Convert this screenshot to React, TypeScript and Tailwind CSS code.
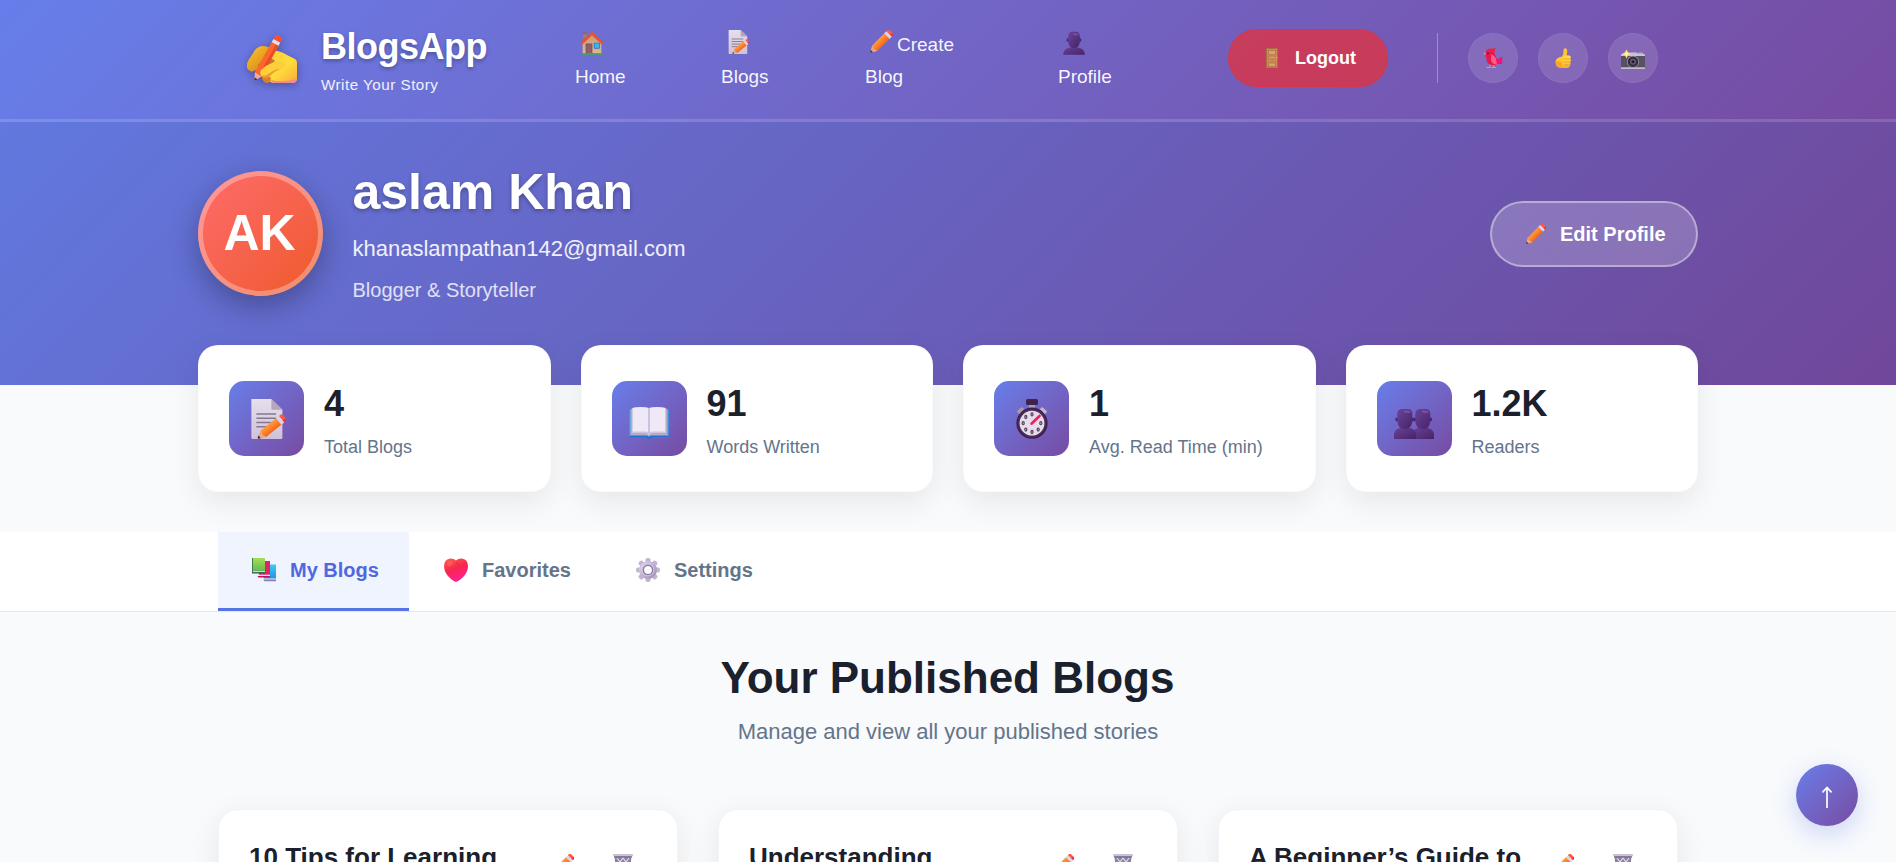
import React from "react";

type IconProps = { className?: string };

function Defs() {
  return (
    <svg className="absolute h-0 w-0" aria-hidden="true">
      <defs>
        <linearGradient id="gOrange" x1="0" x2="1" y1="0" y2="0">
          <stop offset="0" stopColor="#ff9a3c" />
          <stop offset="0.5" stopColor="#ff8228" />
          <stop offset="1" stopColor="#f0641e" />
        </linearGradient>
        <linearGradient id="gHand" x1="0" x2="1" y1="0" y2="1">
          <stop offset="0" stopColor="#ffc83d" />
          <stop offset="0.6" stopColor="#ffdc3c" />
          <stop offset="1" stopColor="#f9a63a" />
        </linearGradient>
        <linearGradient id="gHandBack" x1="0" x2="1" y1="0" y2="1">
          <stop offset="0" stopColor="#ffc928" />
          <stop offset="1" stopColor="#c97318" />
        </linearGradient>
        <linearGradient id="gPaper" x1="0" x2="0" y1="0" y2="1">
          <stop offset="0" stopColor="#e6dfec" />
          <stop offset="1" stopColor="#cfc2d8" />
        </linearGradient>
        <linearGradient id="gBust" x1="0" x2="1" y1="0" y2="1">
          <stop offset="0" stopColor="#6a4399" />
          <stop offset="1" stopColor="#462368" />
        </linearGradient>
        <linearGradient id="gHeart" x1="0.2" x2="0.6" y1="0" y2="1">
          <stop offset="0" stopColor="#ff5a4a" />
          <stop offset="0.45" stopColor="#f8264f" />
          <stop offset="1" stopColor="#ff1f96" />
        </linearGradient>
        <linearGradient id="gGear" x1="0" x2="1" y1="0" y2="1">
          <stop offset="0" stopColor="#d9cde6" />
          <stop offset="1" stopColor="#a794bd" />
        </linearGradient>
        <linearGradient id="gGreen" x1="0" x2="0" y1="0" y2="1">
          <stop offset="0" stopColor="#a6de52" />
          <stop offset="1" stopColor="#5cb557" />
        </linearGradient>
        <linearGradient id="gBlue" x1="0" x2="0" y1="0" y2="1">
          <stop offset="0" stopColor="#3ccbfa" />
          <stop offset="1" stopColor="#2590e6" />
        </linearGradient>
        <linearGradient id="gWood" x1="0" x2="0" y1="0" y2="1">
          <stop offset="0" stopColor="#c59a78" />
          <stop offset="1" stopColor="#dfb88c" />
        </linearGradient>
      </defs>
    </svg>
  );
}

function PencilBody() {
  return (
    <>
      <path d="M11.6 0.5V-1.500Q11.600-4 14-4h4q2.400 0 2.400 2.500v2z" fill="#ff5a3c" />
      <path d="M18 -4q2.400 0 2.400 2.500v2h-2.800z" fill="#e8323a" />
      <rect x="11.600" y="0.300" width="8.800" height="4.400" fill="#dcd3ea" />
      <path d="M11.600 4.600h8.800V27.500L16 29.500l-4.400-2z" fill="url(#gOrange)" />
      <path d="M11.600 27l4.400 1.500 4.400-1.500L16.900 34.600q-.9 1.400-1.800 0z" fill="#e0a98c" />
      <path d="M14.200 32.600h3.600l-.9 2q-.9 1.400-1.800 0z" fill="#4b2348" />
    </>
  );
}

function Pencil({ className }: IconProps) {
  return (
    <svg viewBox="0 0 32 32" className={className}>
      <g transform="rotate(45 16 16) translate(16 0) scale(1.160 1) translate(-16 .5)">
        <PencilBody />
      </g>
    </svg>
  );
}

function Memo({ className }: IconProps) {
  return (
    <svg viewBox="0 0 32 32" className={className}>
      <path d="M3.500 0h16l8.800 8.500V31q0 1-1 1H4.300q-.8 0-.8-1z" fill="url(#gPaper)" />
      <path d="M19.500 0l8.800 8.500h-7.800q-1 0-1-1z" fill="#b3a6bd" />
      <g stroke="#85788f" strokeWidth="1.200">
        <path d="M7.500 12h15.700M7.500 15.400h15.700M7.500 18.800h12M7.500 22.200h8.500" />
      </g>
      <g transform="translate(8.800 31.400) rotate(51) scale(.76 .7) translate(-16 -35)">
        <PencilBody />
      </g>
    </svg>
  );
}

function WritingHand({ className }: IconProps) {
  return (
    <svg viewBox="0 0 50 50" className={className}>
      <path d="M2 37Q-2 35 1 28L8 17Q13 11 21 14L29 18 15 38Q10 41 8 37Q5 40 2 37z" fill="url(#gHandBack)" />
      <path d="M12 32L22 17Q32 17 40 22L48 26Q50 27 50 30V45Q50 50 45 50H28Q22 50 21 45L12 38z" fill="url(#gHand)" />
      <path d="M11 32l9-10 8 6-14 12z" fill="#b05a23" opacity=".75" />
      <path d="M24 47q10 3 26-1 0 4-5 4H28q-3 0-4-3z" fill="#f28a8f" />
      <path d="M15 45q5-5 9 0 0 4-3 5-5 0-6-5z" fill="#e07f26" />
      <g transform="translate(20.300 25) rotate(29) scale(.93)">
        <path d="M-4-21v-3q0-3 3-3h2q3 0 3 3v3z" fill="#ff4f31" />
        <rect x="-4.200" y="-21" width="8.400" height="4" fill="#e6dcf0" />
        <path d="M-4.200-17h8.400v37h-8.400z" fill="#fb672a" />
        <path d="M1-17h3.200v37H1z" fill="#e84d22" />
        <path d="M-4.200 20h8.400L.8 27q-.8 1-1.600 0z" fill="#edaa9b" />
        <path d="M-1.800 25h3.600l-1 2q-.8 1-1.600 0z" fill="#471f45" />
      </g>
      <path d="M14 37q5-5 11-7 8-4 13 0 2 5-5 7-5 1-8 4-5 5-10 3-3-3-1-7z" fill="#ffcf3a" />
      <path d="M14 42q4 2 9-2 5-4 10-4-5 2-9 6-5 5-9 2z" fill="#f09a35" />
    </svg>
  );
}

function House({ className }: IconProps) {
  return (
    <svg viewBox="0 0 32 32" className={className}>
      <rect x="4" y="2.500" width="5" height="9" fill="#a87a66" />
      <rect x="3.600" y="2" width="5.800" height="1.800" fill="#8e6357" />
      <path d="M3.500 14L16 3l12.500 11v16h-25z" fill="url(#gWood)" />
      <path d="M16 .8L31.300 14.600l-1 2.900h-1.800L16 5.500 3.500 17.500H1.700l-1-2.900z" fill="#e2533b" />
      <rect x="7.500" y="16.500" width="9" height="13.500" rx=".6" fill="#7c5260" />
      <rect x="8.800" y="18" width="6.400" height="12" fill="#8f6067" />
      <rect x="18.500" y="15.500" width="8" height="8" rx=".8" fill="#2677c7" />
      <rect x="19.600" y="16.500" width="5.800" height="6" fill="#35b6f5" />
      <rect x="1" y="29.500" width="30" height="2" rx="1" fill="#3fa55c" />
    </svg>
  );
}

function Bust({ className }: IconProps) {
  return (
    <svg viewBox="0 0 32 32" className={className}>
      <path d="M1.500 31.500Q2 23.500 10 22.200l6-1.700 6 1.700q8 1.300 8.500 9.300z" fill="url(#gBust)" />
      <ellipse cx="7.700" cy="12" rx="1.700" ry="2.400" fill="#4a2871" />
      <ellipse cx="24.300" cy="12" rx="1.700" ry="2.400" fill="#4a2871" />
      <path d="M8.300 7Q8.300 1 14 1h4q5.700 0 5.700 6v7q0 8.500-7.700 8.500T8.300 14z" fill="url(#gBust)" />
      <path d="M15 3q6-1 7.500 2-3 2-7.500 0z" fill="#7c55a6" opacity=".8" />
    </svg>
  );
}

function BustWide() {
  return (
    <>
      <path d="M0 40v-4.500Q.3 29.500 7 29l4-1 4 1q6.500.5 7 6.500V40z" fill="url(#gBust)" />
      <ellipse cx="2.800" cy="20.500" rx="1.400" ry="2" fill="#4a2871" />
      <ellipse cx="18.800" cy="20.500" rx="1.400" ry="2" fill="#4a2871" />
      <path d="M3.300 15Q3.300 10 8.500 10h5q4.800 0 4.800 5v6q0 9-7.500 9t-7.500-9z" fill="url(#gBust)" />
      <path d="M10 11.500q6-.8 7 2-3.500 1.400-7 0z" fill="#7c55a6" opacity=".8" />
    </>
  );
}

function Busts({ className }: IconProps) {
  return (
    <svg viewBox="0 0 40 40" className={className}>
      <g transform="translate(18 0)">
        <BustWide />
      </g>
      <BustWide />
    </svg>
  );
}

function Door({ className }: IconProps) {
  return (
    <svg viewBox="0 0 12 20" className={className}>
      <rect width="12" height="20" rx=".6" fill="#a9713f" />
      <rect x="1" y="1" width="10" height="18.500" fill="#c98a58" />
      <path d="M2.500 2.500h7v4.200h-7zM2.500 8.200h7v2.500h-7zM2.500 15h7v3.500h-7z" fill="#dda06e" stroke="#a66b42" strokeWidth=".6" />
      <path d="M1 13.800h10" stroke="#e8734a" strokeWidth=".9" />
      <circle cx="10.500" cy="9.500" r="1" fill="#ff9f1c" />
    </svg>
  );
}

function Bird({ className }: IconProps) {
  return (
    <svg viewBox="0 0 20 20" className={className}>
      <path d="M.4 5.300L3 4.200v2.900z" fill="#ffb02e" />
      <path d="M7 16v3.300M10.600 16v3.300M3.200 19.500h4.300M8.600 19.500h4.300" stroke="#f0a020" strokeWidth="1" fill="none" />
      <path d="M2.500 5.500Q3 1 7.500.4l3 3Q11.800 5 12 7l2.500 5-1 5H8.500Q3.500 16 3.500 10.500 2.300 8 2.500 5.500z" fill="#e5184f" />
      <path d="M14 11.500l5.200-3v7.600H13z" fill="#f0107e" />
      <path d="M8 6.500q3.500.5 5 4.500l1 5.500Q9 16.500 8 12z" fill="#ff5c86" />
      <path d="M4 3Q6.500.2 12.800.2l-1.300 4q-3.500-1-5.500 0z" fill="#f22138" />
      <circle cx="5" cy="5.400" r=".8" fill="#4a1733" />
    </svg>
  );
}

function Thumb({ className }: IconProps) {
  return (
    <svg viewBox="0 0 16 20" className={className}>
      <path d="M7 8.500Q8.700 6 8.500 2 8.500.2 10.200.2q2.300.3 2 3.800l-.6 3.500 2 .3q2.200 1 1.900 2.900l-.3 5.800q-.8 3.200-3.700 3.400H6Q.4 19.500.5 14 .7 9.500 7 8.500z" fill="#ffc62e" />
      <path d="M.6 13q.5 6.500 6 6.700h5Q7 19.500 6.500 14z" fill="#f59a2c" opacity=".75" />
      <rect x="9.200" y="7.500" width="6.500" height="3.300" rx="1.600" fill="#ffdc4a" />
      <rect x="8.800" y="10.700" width="7" height="3.200" rx="1.600" fill="#ffd03c" />
      <rect x="9" y="13.800" width="6.300" height="3" rx="1.500" fill="#ffc535" />
      <rect x="9" y="16.700" width="5.300" height="2.900" rx="1.400" fill="#f9b132" />
      <path d="M9.300 10.800h6M9.100 13.900h6M9.300 16.800h5" stroke="#db8428" strokeWidth=".5" />
    </svg>
  );
}

function Camera({ className }: IconProps) {
  return (
    <svg viewBox="0 0 24 20" className={className}>
      <path d="M0 5q0-1 1-1h6l1-1.500h8L17 4h6q1 0 1 1v2H0z" fill="#cbc3d3" />
      <rect x="17" y="2.500" width="5" height="1.600" rx=".6" fill="#b6acc0" />
      <rect x="0" y="6" width="24" height="12" fill="#57525f" />
      <rect x="0" y="17.200" width="24" height="1.800" rx=".6" fill="#c5bbcd" />
      <circle cx="12" cy="11.700" r="6" fill="#a79db3" />
      <circle cx="12" cy="11.700" r="5.300" fill="#332d3d" />
      <circle cx="12" cy="11.700" r="3" fill="#665b7c" />
      <circle cx="12" cy="11.700" r="1.500" fill="#221c30" />
      <path d="M5.500-.5L7 2.200 10 3.800 7 5.500 5.500 8.500 4 5.500 1 3.800 4 2.200z" fill="#ffd873" />
      <path d="M5.500 1l.9 2 1.800.9-1.800.9-.9 2-.9-2L2.800 3.900 4.600 3z" fill="#fff0b8" />
    </svg>
  );
}

function OpenBook({ className }: IconProps) {
  return (
    <svg viewBox="0 0 40 40" className={className}>
      <rect x=".3" y="10.500" width="39.400" height="28" rx="1" fill="#29a9f2" />
      <path d="M.3 37h39.400v1.500h-17q-.5 1.500-2.700 1.500t-2.700-1.500H.3z" fill="#1f72d4" />
      <path d="M1.500 36V10.500L4 8.800h32l2.500 1.700V36H22l-2 1.800L18 36z" fill="#b8aac4" />
      <path d="M3.500 34V9q5-1.500 13-.800 2.800.2 3.500 1.800.7-1.600 3.500-1.800 8-.700 13 .8v25H23q-2.200 0-3 2-.8-2-3-2z" fill="#efe9f7" />
      <path d="M3.500 32.500H17q2.200 0 3 2 .8-2 3-2h13.500V34H23q-2.200 0-3 2-.8-2-3-2H3.500z" fill="#d0c3dc" />
      <path d="M19.200 10v24.200h1.600V10L20 9z" fill="#c4b8d8" />
    </svg>
  );
}

function Stopwatch({ className }: IconProps) {
  return (
    <svg viewBox="0 0 32 40" className={className}>
      <rect x="13" y="4.500" width="6" height="6" fill="#a99eae" />
      <rect x="10" y="0" width="12" height="6" rx="1.600" fill="#40224f" />
      <g transform="rotate(-42 5 12)">
        <rect x="1.500" y="9.500" width="7" height="5" rx="1" fill="#a89ba8" />
      </g>
      <g transform="rotate(42 27 12)">
        <rect x="23.500" y="9.500" width="7" height="5" rx="1" fill="#c1b5c8" />
      </g>
      <circle cx="16" cy="24.200" r="15.600" fill="#38214e" />
      <circle cx="16" cy="24.200" r="14.200" fill="#522a58" />
      <circle cx="16" cy="24.200" r="12.400" fill="#e6dcec" />
      <g fill="none" stroke="#554560" strokeWidth="1.300">
        <ellipse cx="16" cy="15.400" rx="1" ry="1.500" />
        <ellipse cx="22.200" cy="30.600" rx="1" ry="1.500" />
        <ellipse cx="24.800" cy="24.200" rx="1" ry="1.500" />
        <ellipse cx="16" cy="33" rx="1" ry="1.500" />
        <ellipse cx="9.800" cy="30.600" rx="1" ry="1.500" />
        <ellipse cx="7.200" cy="24.200" rx="1" ry="1.500" />
        <ellipse cx="9.800" cy="18" rx="1" ry="1.500" />
      </g>
      <path d="M15.500 24.700l8-7.700" stroke="#e9205c" strokeWidth="2.600" strokeLinecap="round" />
    </svg>
  );
}

function Books({ className }: IconProps) {
  return (
    <svg viewBox="0 0 24 24" className={className}>
      <path d="M12 6.500h12V21H13q-2 0-1-3z" fill="url(#gBlue)" />
      <path d="M12 20.300h12v1.300H12z" fill="#d8d0e8" />
      <path d="M11.500 21.600H24v1.600H12.500q-1-.3-1-1.600z" fill="#8c7db8" />
      <path d="M6 3h12v15H7z" fill="#e5235a" />
      <path d="M6 16.700h12v1.300H6z" fill="#efe5f0" />
      <path d="M5.500 18H18v1.500H6.500z" fill="#b01a56" />
      <path d="M0 0h13v14.500H0z" fill="url(#gGreen)" />
      <path d="M0 0h1v15H0z" fill="#3d7f4b" />
      <path d="M1 13.200h12v1H1z" fill="#e9e2f2" />
      <path d="M0 14.200h13v1.300H0z" fill="#275b54" />
    </svg>
  );
}

function Heart({ className }: IconProps) {
  return (
    <svg viewBox="0 0 24 24" className={className}>
      <path d="M12 2.500Q14 .5 17.500.6 24 1.200 24 8.500q-.3 7-7 12.500-3 2.500-5 3-2-.5-5-3Q.3 15.500 0 8.500 0 1.200 6.500.6 10 .5 12 2.500z" fill="url(#gHeart)" />
      <ellipse cx="6" cy="5.500" rx="3" ry="2.300" fill="#ff8179" opacity=".35" transform="rotate(-40 6 5.500)" />
      <path d="M12 2.500q1.500 3 4 4.500-4 2-4-4.500z" fill="#c81b3a" opacity=".3" />
    </svg>
  );
}

const gearTeeth = [0, 45, 90, 135, 180, 225, 270, 315];

function Gear({ className }: IconProps) {
  return (
    <svg viewBox="0 0 24 24" className={className}>
      {gearTeeth.map((a) => (
        <rect key={a} x="9.400" y="0" width="5.200" height="7" rx="2" fill="#c3b5d4" transform={`rotate(${a} 12 12)`} />
      ))}
      <circle cx="12" cy="12" r="6.500" fill="none" stroke="url(#gGear)" strokeWidth="5" />
      <circle cx="12" cy="12" r="4.700" fill="none" stroke="#8d7ba1" strokeWidth="1.500" />
      <circle cx="11.800" cy="11.800" r="6" fill="none" stroke="#ddd3e8" strokeWidth=".8" />
    </svg>
  );
}

function Wastebasket({ className }: IconProps) {
  return (
    <svg viewBox="0 0 20 24" className={className}>
      <path d="M1.500 2h17l-2 21q0 1-1 1h-11q-1 0-1-1z" fill="#8e82a4" />
      <path d="M4 4l3 4 3-4 3 4 3-4M4 12l3-4 3 4 3-4 3 4M4.500 12l2.500 4 3-4 3 4 2.500-4M5 20l2-4 3 4 3-4 2 4" fill="none" stroke="#e5deef" strokeWidth="1.100" />
      <rect x="0" y="0" width="20" height="2.400" rx="1" fill="#c9c2d2" />
      <rect x="1" y="2.300" width="18" height="1.200" fill="#756a8d" />
    </svg>
  );
}

const stats = [
  { value: "4", label: "Total Blogs", icon: <Memo className="h-10 w-10" /> },
  { value: "91", label: "Words Written", icon: <OpenBook className="h-10 w-10" /> },
  { value: "1", label: "Avg. Read Time (min)", icon: <Stopwatch className="h-10 w-8" /> },
  { value: "1.2K", label: "Readers", icon: <Busts className="h-10 w-10" /> },
];

const tabs = [
  { label: "My Blogs", icon: <Books className="h-6 w-6" />, active: true },
  { label: "Favorites", icon: <Heart className="h-6 w-6" />, active: false },
  { label: "Settings", icon: <Gear className="h-6 w-6" />, active: false },
];

const blogs = ["10 Tips for Learning", "Understanding", "A Beginner’s Guide to"];

const socials = [
  { name: "bird", icon: <Bird className="h-5 w-5" /> },
  { name: "thumb", icon: <Thumb className="h-5 w-4" /> },
  { name: "camera", icon: <Camera className="mt-1 h-5 w-6 overflow-visible" /> },
];

function Header() {
  return (
    <header className="h-[122px] border-b-[3px] border-white/15 bg-linear-135 from-[#667eea] to-[#764ba2] bg-origin-border">
      <div className="mx-auto flex h-[116px] w-[1420px] items-center">
        <div className="flex w-[337px] items-center">
          <WritingHand className="ml-[9px] h-[50px] w-[50px] drop-shadow-[0_2px_4px_rgba(0,0,0,0.3)]" />
          <div className="mt-1.5 ml-6 flex flex-col gap-2">
            <span className="text-[36px] leading-10 font-bold tracking-[-0.5px] text-white [text-shadow:0_2px_4px_rgba(0,0,0,0.3)]">
              BlogsApp
            </span>
            <span className="text-[15.2px] leading-5 tracking-[0.5px] text-white/90">Write Your Story</span>
          </div>
        </div>
        <nav className="mt-1.5 flex text-[19px] leading-8 text-white/95">
          <a className="flex w-[146px] flex-col">
            <span className="flex h-8 items-start pt-0.5 pl-[5px]">
              <House className="h-6 w-6" />
            </span>
            Home
          </a>
          <a className="flex w-[144px] flex-col">
            <span className="flex h-8 items-start pt-px pl-[5px]">
              <Memo className="h-6 w-6" />
            </span>
            Blogs
          </a>
          <a className="flex w-[193px] flex-col">
            <span className="flex h-8 items-start gap-1 pl-1">
              <Pencil className="mt-px h-6 w-6" />
              Create
            </span>
            Blog
          </a>
          <a className="flex w-[170px] flex-col">
            <span className="flex h-8 items-start pt-0.5 pl-1">
              <Bust className="h-6 w-6" />
            </span>
            Profile
          </a>
        </nav>
        <button className="flex h-[58px] w-40 items-center rounded-full border border-[#dc3545]/80 bg-[#dc3545]/80 pl-[37px] text-[18px] font-bold text-white">
          <Door className="h-5 w-3" />
          <span className="ml-[17px]">Logout</span>
        </button>
        <div className="ml-[49px] h-[50px] w-px bg-white/30" />
        <div className="ml-[30px] flex gap-5">
          {socials.map((s) => (
            <a
              key={s.name}
              className="flex h-[50px] w-[50px] items-center justify-center rounded-full border border-white/5 bg-white/12"
            >
              {s.icon}
            </a>
          ))}
        </div>
      </div>
    </header>
  );
}

function Hero() {
  return (
    <section className="h-[263px] bg-[linear-gradient(rgba(0,0,0,0.05),rgba(0,0,0,0.05)),linear-gradient(135deg,#667eea,#764ba2)]">
      <div className="mx-auto flex w-[1500px] items-start pt-[42px]">
        <div className="mt-[7px] flex h-[125px] w-[125px] items-center justify-center rounded-full border-[5px] border-white/30 bg-linear-135 from-[#ff6b6b] to-[#ee5a24] bg-origin-border text-[50px] font-bold text-white shadow-[0_10px_30px_rgba(0,0,0,0.3)]">
          <span className="pr-0.5">AK</span>
        </div>
        <div className="ml-[29.5px]">
          <h1 className="text-[50px] leading-[56px] font-bold text-white [text-shadow:0_2px_4px_rgba(0,0,0,0.3)]">aslam Khan</h1>
          <p className="mt-[15px] text-[22px] leading-7 text-white/90">khanaslampathan142@gmail.com</p>
          <p className="mt-3.5 text-[20px] leading-[26px] text-white/80">Blogger &amp; Storyteller</p>
        </div>
        <button className="mt-[37px] ml-auto flex h-[66px] w-52 items-center rounded-full border-2 border-white/40 bg-white/20 pl-[33px] text-[20px] font-bold text-white">
          <Pencil className="h-[21px] w-[21px]" />
          <span className="ml-3.5">Edit Profile</span>
        </button>
      </div>
    </section>
  );
}

export default function App() {
  return (
    <div className="h-[862px] overflow-hidden bg-[#f8fafc] font-['Liberation_Sans',Arial,sans-serif]">
      <Defs />
      <Header />
      <Hero />
      <section className="relative mx-auto -mt-10 grid w-[1500px] grid-cols-4 gap-[30px]">
        {stats.map((s) => (
          <div
            key={s.label}
            className="flex h-[147px] items-center gap-5 rounded-[20px] border border-black/[0.02] bg-white bg-clip-border px-[30px] shadow-[0_10px_30px_rgba(0,0,0,0.08)]"
          >
            <div className="flex h-[75px] w-[75px] items-center justify-center rounded-[15px] bg-linear-135 from-[#667eea] to-[#764ba2]">
              {s.icon}
            </div>
            <div className="mt-[5px]">
              <div className="text-[36px] leading-10 font-bold text-[#1a202c]">{s.value}</div>
              <div className="mt-[11px] text-[18px] leading-6 text-[#64748b]">{s.label}</div>
            </div>
          </div>
        ))}
      </section>
      <section className="mt-10 h-20 border-b border-[#e2e8f0] bg-white">
        <div className="mx-auto flex w-[1460px] gap-px">
          {tabs.map((t) => (
            <button
              key={t.label}
              className={
                t.active
                  ? "flex h-[79px] w-[191px] items-center border-b-[3px] border-[#5673e6] bg-[#f0f4ff] pl-[34px] text-[20px] font-bold text-[#4f68e0]"
                  : "flex h-[79px] w-[191px] items-center border-b-[3px] border-transparent pl-[34px] text-[20px] font-bold text-[#64748b]"
              }
            >
              {t.icon}
              <span className="ml-3.5">{t.label}</span>
            </button>
          ))}
        </div>
      </section>
      <main className="mx-auto w-[1460px] pt-10">
        <h2 className="pr-px text-center text-[44px] leading-[52px] font-bold text-[#1a202c]">Your Published Blogs</h2>
        <p className="mt-[13px] text-center text-[22px] leading-[30px] text-[#64748b]">Manage and view all your published stories</p>
        <div className="mt-[62px] grid grid-cols-3 gap-10">
          {blogs.map((b) => (
            <article
              key={b}
              className="flex h-[300px] justify-between rounded-[20px] border border-[#f1f5f9] bg-white p-[29px] shadow-[0_8px_30px_rgba(0,0,0,0.08)]"
            >
              <h3 className="pt-px pl-px text-[26px] leading-[34px] font-bold text-[#1a202c]">{b}</h3>
              <div className="flex gap-2.5 pt-[15px]">
                <span className="flex w-[50px] justify-center">
                  <Pencil className="h-[22px] w-[22px]" />
                </span>
                <span className="flex w-[50px] justify-center">
                  <Wastebasket className="h-6 w-5" />
                </span>
              </div>
            </article>
          ))}
        </div>
      </main>
      <button className="fixed right-[38px] bottom-9 flex h-[62px] w-[62px] items-center justify-center rounded-full bg-linear-135 from-[#667eea] to-[#764ba2] shadow-[0_8px_25px_rgba(102,126,234,0.3)]">
        <svg viewBox="0 0 12 22" className="mt-1 h-[22px] w-3" fill="none" stroke="#fff" strokeWidth="1.700">
          <path d="M6 22V2M1.500 6.300L6 1.500l4.500 4.800" />
        </svg>
      </button>
    </div>
  );
}
